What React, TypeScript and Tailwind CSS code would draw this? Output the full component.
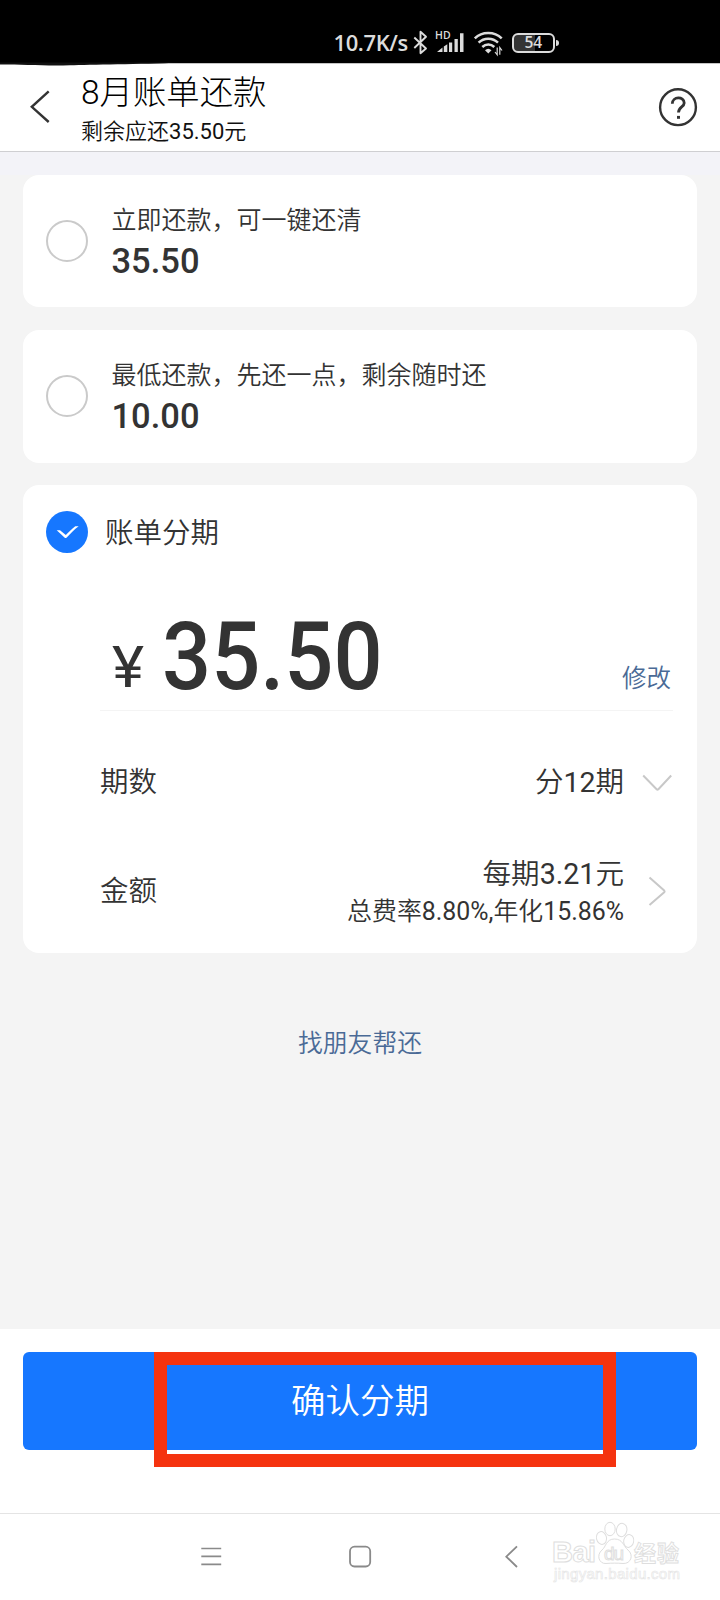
import type { ReactNode } from "react";

function StatusBar() {
  return (
    <div className="relative flex h-[63px] items-start bg-black pl-[333.5px] pt-[28px] text-[#dcdcdc]">
      <span className="-mt-px w-[76.5px] font-['Open_Sans'] text-[22px] leading-[30px] font-semibold tracking-[-0.4px] whitespace-nowrap">10.7K/s</span>
      <svg width="22" height="30" viewBox="410 28 22 30" className="shrink-0" fill="none" stroke="#dcdcdc" strokeWidth="1.9">
        <path d="M414.3 37.5 426 48.5 420.5 53.2V31.8L426 36.8 414.3 48" strokeLinejoin="round" />
      </svg>
      <div className="w-[35px] shrink-0">
        <svg width="35" height="32" viewBox="432 28 35 32" fill="#dcdcdc">
          <path d="M437 51.9 442.5 47.5V51.9ZM443.8 46.5 447.3 44.2V51.9H443.8ZM449 42.5H452.2V51.9H449ZM454.5 39H457.8V51.9H454.5ZM460 33.2H463.5V51.9H460Z" />
          <text x="435" y="39.3" fontSize="10.5" fontWeight="600" fontFamily="Open Sans" letterSpacing="0.2" stroke="#000" strokeWidth="1" paintOrder="stroke">HD</text>
        </svg>
      </div>
      <svg width="38" height="32" viewBox="467 28 38 32" className="shrink-0" fill="none" stroke="#dcdcdc" strokeWidth="2.5">
        <path d="M474.8 38.4C482 31.2 494.5 31.2 501.7 38.4" />
        <path d="M478.6 42.7C484 37.5 492.5 37.5 498 42.7" />
        <path d="M482.3 47C485.8 43.7 490.8 43.7 494.3 47" />
        <path d="M485 50.2Q488.2 47.2 491.5 50.2L488.3 53.5Z" fill="#dcdcdc" stroke="none" />
        <path d="M497.2 47.5V54.8L495 52M499.8 54.8V47.5L502 50.5" strokeWidth="1.2" />
      </svg>
      <div className="ml-[7px] mt-[4.5px] flex h-[20.5px] w-[42.5px] shrink-0 items-center justify-center rounded-[6px] border-[2.5px] border-[#dcdcdc] bg-[linear-gradient(90deg,#343434_54%,#000_54%)] font-['Open_Sans'] text-[15.5px] leading-none font-semibold">
        54
      </div>
      <div className="ml-[1.5px] mt-[12px] h-[6px] w-[2.5px] rounded-r-sm bg-[#dcdcdc]" />
    </div>
  );
}

function Header() {
  return (
    <header className="relative flex h-[89px] items-start border-t border-b border-t-[#c4c4c4] border-b-[#cfcfd2] bg-white">
      <svg width="81" height="87" viewBox="0 64 81 87" className="shrink-0 overflow-visible" fill="none">
        <path d="M0 62.5H180C140 64.5 90 64.5 70 65.3C50 66.3 20 64.5 0 64.6Z" fill="#111" className="blur-[0.7px]" />
        <path d="M48.7 91.3 31.8 106.8 48.7 122" stroke="#333" strokeWidth="2.4" />
      </svg>
      <div className="flex flex-col whitespace-nowrap text-black">
        <h1 className="mt-[9px] text-[33.4px] leading-[40px] font-light">8月账单还款</h1>
        <p className="mt-[4px] text-[22px] leading-[30px] text-[#111]">
          剩余应还<span className="font-normal">35.50</span>元
        </p>
      </div>
      <svg width="44" height="44" viewBox="656 85 44 44" className="mt-[21px] mr-[20px] ml-auto" fill="none" stroke="#333">
        <circle cx="678" cy="107.2" r="17.9" strokeWidth="2.4" />
        <path d="M672.3 103.8C672.3 96 684.2 96.3 684.2 102.9C684.2 107 678.5 107 678.5 112.5" strokeWidth="2.8" />
        <path d="M677 115.9H680V118.8H677Z" fill="#333" stroke="none" />
      </svg>
    </header>
  );
}

function Option({ label, amount, className }: { label: string; amount: string; className: string }) {
  return (
    <section className={`flex items-start rounded-2xl bg-white pl-[23px] ${className}`}>
      <span className="mt-[45px] size-[42px] shrink-0 rounded-full border-2 border-[#cacaca]" />
      <div className="ml-[23.5px] mt-[28px] text-[#333]">
        <p className="text-[25px] leading-[36px]">{label}</p>
        <p className="mt-px text-[34.5px] leading-[42px] font-medium">{amount}</p>
      </div>
    </section>
  );
}

function Row({ label, children, className }: { label: string; children: ReactNode; className: string }) {
  return (
    <div className={`flex items-center justify-between ${className}`}>
      <span className="text-[28.5px] leading-[40px]">{label}</span>
      <div className="flex items-center">{children}</div>
    </div>
  );
}

function InstallmentCard() {
  return (
    <section className="mt-[22px] flex h-[468px] flex-col rounded-2xl bg-white pr-[24px] pl-[23px] text-[#333]">
      <div className="mt-[25px] flex h-[43px] items-center">
        <svg width="42" height="42" viewBox="0 0 42 42" className="shrink-0">
          <circle cx="21" cy="21" r="21" fill="#1677ff" />
          <path d="M10.7 19.2H14L19.8 23.9C22.8 21 26 17.5 29.3 15.2H32.7C28.3 18.3 24.2 23 20.7 26.6Q19.6 27.6 18.5 26.6Z" fill="#fff" />
        </svg>
        <h2 className="mt-[5px] ml-[17px] text-[28.5px] leading-[40px]">账单分期</h2>
      </div>
      <div className="ml-[54px] flex h-[158px] items-end border-b border-[#f4f4f4] pl-[12px]">
        <span className="mb-[12px] w-[49.5px] origin-left scale-x-[1.07] text-[57px] leading-[60px] font-normal">¥</span>
        <span className="mb-[3px] origin-left scale-x-[0.92] text-[94px] leading-[100px] font-medium">35.50</span>
        <a className="mr-[2px] mb-[13px] ml-auto text-[24.5px] leading-[36px] text-[#4a6a96]">修改</a>
      </div>
      <Row label="期数" className="mt-[52px] ml-[54px] h-[40px]">
        <span className="text-[28.5px] leading-[40px]">
          分<span className="font-normal">12</span>期
        </span>
        <svg width="49" height="40" viewBox="0 0 49 40" fill="none" stroke="#c8c8c8" strokeWidth="2">
          <path d="M19.2 12.5 32.6 26.2Q33.5 27 34.4 26.2L47.2 12.5" />
        </svg>
      </Row>
      <Row label="金额" className="mt-[50px] ml-[54px] h-[78px]">
        <div className="text-right whitespace-nowrap">
          <p className="text-[28.6px] leading-[40px]">
            每期<span className="font-normal">3.21</span>元
          </p>
          <p className="text-[24.9px] leading-[36px]">
            总费率<span className="font-normal">8.80%,</span>年化<span className="font-normal">15.86%</span>
          </p>
        </div>
        <svg width="49" height="40" viewBox="0 0 49 40" fill="none" stroke="#c8c8c8" strokeWidth="2">
          <path d="M25.5 5.5 40.2 18.6Q41 19.4 40.2 20.2L25.5 33" />
        </svg>
      </Row>
    </section>
  );
}

function Watermark() {
  return (
    <svg width="140" height="76" viewBox="550 1518 140 76" className="absolute top-[4px] left-[550px]" fill="#fff" stroke="#dedede" strokeWidth="1">
      <text x="552" y="1562" fontSize="29" fontWeight="700" fontFamily="Liberation Sans" textLength="44">Bai</text>
      <ellipse cx="601.5" cy="1538" rx="5" ry="6.5" transform="rotate(-12 601.5 1538)" />
      <ellipse cx="610" cy="1529" rx="5.2" ry="6.7" />
      <ellipse cx="621.7" cy="1530" rx="5.2" ry="6.7" transform="rotate(10 621.7 1530)" />
      <ellipse cx="628.7" cy="1541" rx="5" ry="6.5" transform="rotate(12 628.7 1541)" />
      <path d="M614.5 1539C606 1539 606 1547 602 1550C596 1555 599 1564 606 1563.5C612 1563 617 1563 623 1563.5C631 1564 634 1555 628 1550C623 1546 623 1539 614.5 1539Z" />
      <text x="604" y="1560" fontSize="19" fontWeight="400" fontFamily="Liberation Sans" textLength="20">du</text>
      <text x="634" y="1560.5" fontSize="22" fontWeight="700" fontFamily="Noto Sans CJK SC" textLength="45" strokeWidth=".9">经验</text>
      <text x="554" y="1579" fontSize="15" fontFamily="Liberation Sans" textLength="126" strokeWidth=".6" stroke="#e4e4e4">jingyan.baidu.com</text>
    </svg>
  );
}

function NavBar() {
  return (
    <nav className="relative flex h-[87px] items-start border-t border-[#e4e4e4] bg-white pl-[196px] pt-[27px]">
      <svg width="30" height="30" viewBox="196 1541 30 30" fill="none" stroke="#8a8a8a" strokeWidth="1.6">
        <path d="M201.3 1548.5H221.2M201.3 1556.4H221.2M201.3 1564.4H221.2" />
      </svg>
      <svg width="30" height="30" viewBox="345 1541 30 30" className="ml-[119px]" fill="none" stroke="#8a8a8a" strokeWidth="1.8">
        <rect x="350" y="1546.7" width="20.2" height="19.8" rx="4.5" />
      </svg>
      <svg width="30" height="30" viewBox="495 1541 30 30" className="ml-[120px]" fill="none" stroke="#8a8a8a" strokeWidth="1.8">
        <path d="M517 1546.3 506.3 1556.7 517 1567" />
      </svg>
      <Watermark />
    </nav>
  );
}

export default function App() {
  return (
    <div lang="zh-CN" className="flex h-[1600px] w-[720px] flex-col overflow-hidden bg-[#f4f4f4] font-['Roboto','Noto_Sans_CJK_SC',sans-serif] font-[350]">
      <StatusBar />
      <Header />
      <div className="h-[23px] bg-[#f3f3f8]" />
      <main className="flex grow flex-col px-[23px]">
        <Option label="立即还款，可一键还清" amount="35.50" className="h-[132px]" />
        <Option label="最低还款，先还一点，剩余随时还" amount="10.00" className="mt-[23px] h-[133px]" />
        <InstallmentCard />
        <a className="mt-[73px] text-center text-[24.8px] leading-[36px] text-[#4a6a96]">找朋友帮还</a>
      </main>
      <footer className="relative h-[184px] bg-white px-[23px] pt-[23px]">
        <button className="block h-[98px] w-full rounded-[6px] bg-[#1677ff] pt-[2px] text-[34.5px] font-[350] text-white">确认分期</button>
        <div className="absolute top-[23px] left-[154px] h-[115px] w-[462px] border-[13.5px] border-[#f5330f]" />
      </footer>
      <NavBar />
    </div>
  );
}
